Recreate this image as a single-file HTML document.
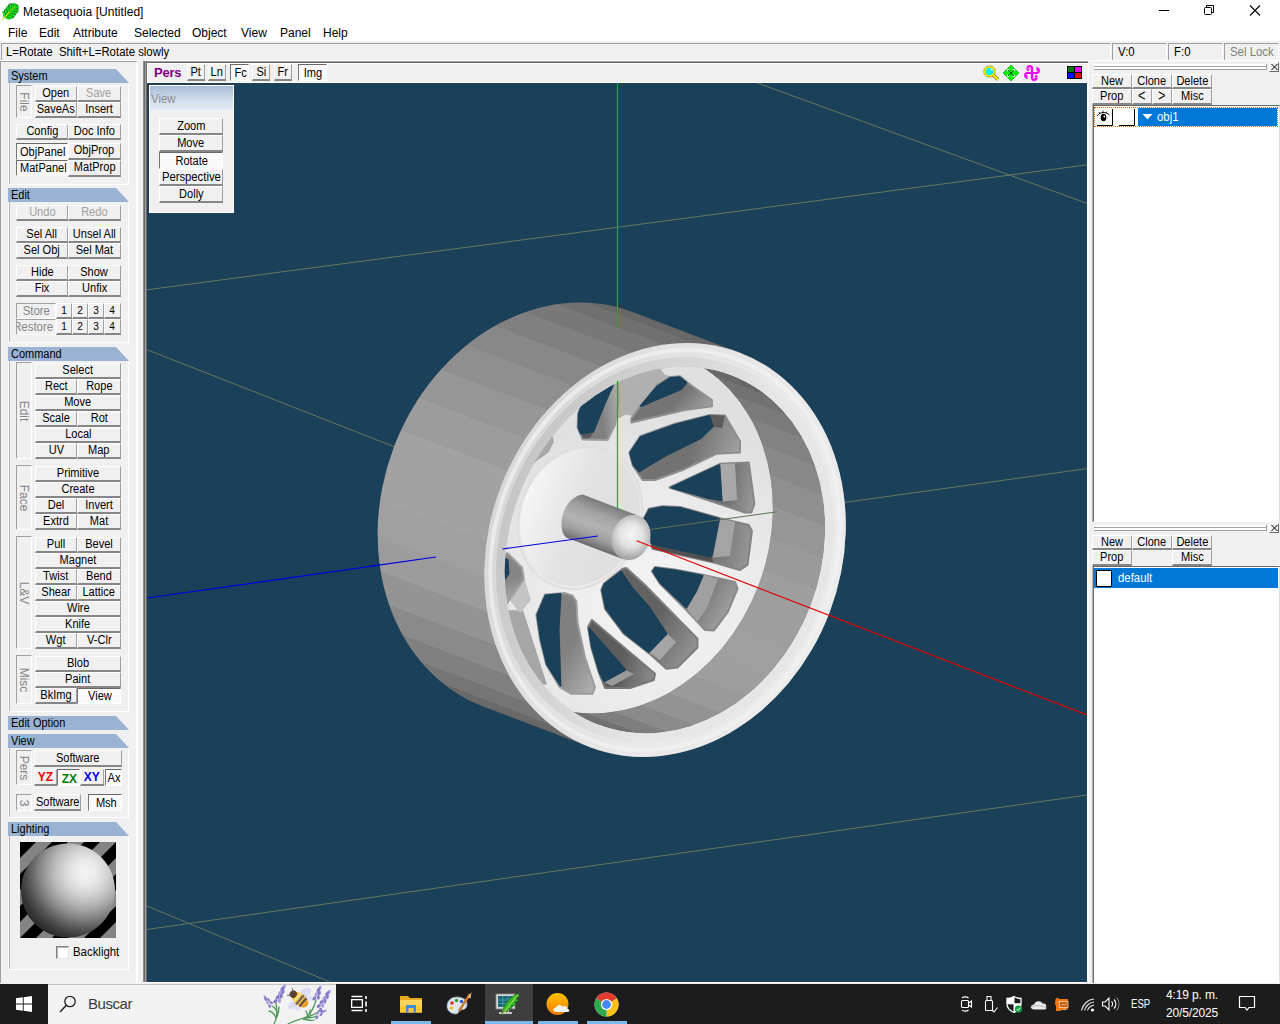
<!DOCTYPE html><html><head><meta charset="utf-8"><title>Metasequoia [Untitled]</title><style>
*{box-sizing:border-box;margin:0;padding:0}
html,body{width:1280px;height:1024px;overflow:hidden;background:#f0f0f0}
body{position:relative;font-family:"Liberation Sans",sans-serif;font-size:12px;color:#000}
.a{position:absolute}
.t{position:absolute;white-space:nowrap;line-height:14px;font-size:12px}
.b{position:absolute;background:#f0f0f0;border-top:1px solid #fff;border-left:1px solid #fff;border-right:1px solid #a0a0a0;border-bottom:2px solid #868686;font-size:12px;line-height:13px;white-space:nowrap;overflow:hidden;display:flex;justify-content:center;align-items:flex-start}
.b>span{display:block;flex:none;transform:scaleX(.92);position:relative;top:0px}
.b.p{border-top:1px solid #696969;border-left:1px solid #767676;border-right:1px solid #fff;border-bottom:1px solid #fff;background:#f9f9f9}
.b.p>span{top:1px;left:1px}
.b.p.t2>span{top:2px}
.sx{display:inline-block;transform:scaleX(.95);transform-origin:0 50%}
.b.d{color:#a0a0a0}
.hd{position:absolute;left:8px;width:121px;height:14px;background:#9ab3d3;clip-path:polygon(0 0,108px 0,121px 14px,0 14px);font-size:12px;line-height:14px;padding-left:3px}
.hd span{display:inline-block;transform:scaleX(.915);transform-origin:0 50%}
.gb{position:absolute;left:8px;width:121px;border:1px solid #fff;border-top:none;box-shadow:inset 1px 0 0 #b4b4b4}
.vl{position:absolute;border-top:1px solid #a0a0a0;border-left:1px solid #a0a0a0;border-right:1px solid #fff;border-bottom:1px solid #fff;color:#858585;font-size:12px}
.vl span{position:absolute;left:50%;top:50%;transform:translate(-50%,-50%) rotate(90deg);white-space:nowrap;line-height:12px}
.sc{position:absolute;border-top:1px solid #a0a0a0;border-left:1px solid #a0a0a0;border-right:1px solid #fff;border-bottom:1px solid #fff;font-size:12px;line-height:14px;padding-left:4px;white-space:nowrap;overflow:hidden}
.seg{font-family:"Liberation Sans",sans-serif}
</style></head><body>
<div class="a" style="left:0;top:0;width:1280px;height:22px;background:#fff"></div>
<svg class="a" style="left:1px;top:2px" width="19" height="19" viewBox="0 0 19 19">
<path d="M2 10 L8.500 1.500 L14.500 1.500 L17.500 3.500 L17.500 9 L12 16.500 L6 17 L2.500 15 Z" fill="#0c8a14"/>
<g stroke="#5a6a7a" stroke-width="1.200" fill="none" opacity="0.700"><path d="M1.500 9.500 L3.500 13 M3.500 7 L5.500 11 M5.500 4.500 L7.500 9 M7.500 2.500 L9.500 7 M9.500 1.200 L11.500 5"/><path d="M16.800 9.800 L13 11 M15 12.500 L11 13.500 M13 15.500 L9 15.800"/></g>
<g stroke="#14e61c" stroke-width="1.500" fill="none" stroke-linecap="round"><path d="M2.500 10.500 L4 14.500 M4.500 8 L6 12.500 M6.500 5.500 L8 10.500 M8.800 3 L10 8.500 M11 2 L12 6.500 M13.800 2 L13.500 5"/>
<path d="M17 4.500 L13.500 6 M17 8 L12 8.300 M15.500 11 L10.500 10.300 M13.500 13.500 L8.800 12.200 M11.500 15.800 L7 14 M8.500 17 L5 15.800"/></g>
<path d="M1.500 17.500 L14.500 4" stroke="#c8dc10" stroke-width="1.100" fill="none"/><path d="M9 10 L14.500 4" stroke="#3cc818" stroke-width="1.100" fill="none"/>
</svg>
<div class="t" style="left:23px;top:5px;font-size:12px;letter-spacing:0.05px">Metasequoia [Untitled]</div>
<svg class="a" style="left:1142px;top:0" width="138" height="22" viewBox="0 0 138 22">
<path d="M17 10.5 H27" stroke="#000" stroke-width="1"/>
<rect x="62.500" y="7.500" width="7" height="7" fill="none" stroke="#000" rx="1"/>
<path d="M64.500 7.500 V5.500 H71.500 V12.500 H69.500" fill="none" stroke="#000"/>
<path d="M108 5.500 L118 15.500 M118 5.500 L108 15.500" stroke="#000" stroke-width="1.1"/>
</svg>
<div class="a" style="left:0;top:22px;width:1280px;height:19px;background:#fff"></div>
<div class="t" style="left:8px;top:26px">File</div>
<div class="t" style="left:39px;top:26px">Edit</div>
<div class="t" style="left:73px;top:26px">Attribute</div>
<div class="t" style="left:134px;top:26px">Selected</div>
<div class="t" style="left:192px;top:26px">Object</div>
<div class="t" style="left:241px;top:26px">View</div>
<div class="t" style="left:280px;top:26px">Panel</div>
<div class="t" style="left:323px;top:26px">Help</div>
<div class="a" style="left:0;top:41px;width:1280px;height:20px;background:#f0f0f0"></div>
<div class="sc" style="left:1px;top:43px;width:1110px;height:18px;line-height:17px"><i class="sx" style="font-style:normal">L=Rotate&nbsp;&nbsp;Shift+L=Rotate slowly</i></div>
<div class="sc" style="left:1112px;top:43px;width:55px;height:18px;padding-left:5px;line-height:17px"><i class="sx" style="font-style:normal">V:0</i></div>
<div class="sc" style="left:1168px;top:43px;width:55px;height:18px;padding-left:5px;line-height:17px"><i class="sx" style="font-style:normal">F:0</i></div>
<div class="sc" style="left:1224px;top:43px;width:55px;height:18px;padding-left:5px;line-height:17px;color:#808080"><i class="sx" style="font-style:normal">Sel Lock</i></div>
<div class="a" style="left:0;top:60px;width:1280px;height:1px;background:#fff"></div>
<div class="a" style="left:0;top:61px;width:138px;height:923px;background:#f0f0f0;border-left:1px solid #a0a0a0;border-top:1px solid #a0a0a0;border-right:2px solid #fff;border-bottom:1px solid #fff"></div>
<div class="a" style="left:138px;top:61px;width:5px;height:923px;background:#f0f0f0"></div>
<div class="hd" style="top:69px"><span>System</span></div>
<div class="gb" style="top:83px;height:102px"></div>
<div class="vl" style="left:16px;top:85px;width:16px;height:33px"><span>File</span></div>
<div class="b " style="left:35px;top:86px;width:42px;height:16px;"><span>Open</span></div>
<div class="b d" style="left:77px;top:86px;width:44px;height:16px;"><span>Save</span></div>
<div class="b " style="left:35px;top:102px;width:42px;height:16px;"><span>SaveAs</span></div>
<div class="b " style="left:77px;top:102px;width:44px;height:16px;"><span>Insert</span></div>
<div class="b " style="left:16px;top:124px;width:52px;height:16px;"><span>Config</span></div>
<div class="b " style="left:68px;top:124px;width:53px;height:16px;"><span>Doc Info</span></div>
<div class="b p t2" style="left:16px;top:143px;width:52px;height:17px;"><span>ObjPanel</span></div>
<div class="b " style="left:68px;top:143px;width:53px;height:17px;padding-top:1px;padding-top:0"><span>ObjProp</span></div>
<div class="b p" style="left:16px;top:160px;width:52px;height:16px;"><span>MatPanel</span></div>
<div class="b " style="left:68px;top:160px;width:53px;height:17px;padding-top:1px;padding-top:0"><span>MatProp</span></div>
<div class="hd" style="top:188px"><span>Edit</span></div>
<div class="gb" style="top:202px;height:141px"></div>
<div class="b d" style="left:16px;top:205px;width:52px;height:16px;"><span>Undo</span></div>
<div class="b d" style="left:68px;top:205px;width:53px;height:16px;"><span>Redo</span></div>
<div class="b " style="left:16px;top:227px;width:52px;height:16px;"><span>Sel All</span></div>
<div class="b " style="left:68px;top:227px;width:53px;height:16px;"><span>Unsel All</span></div>
<div class="b " style="left:16px;top:243px;width:52px;height:16px;"><span>Sel Obj</span></div>
<div class="b " style="left:68px;top:243px;width:53px;height:16px;"><span>Sel Mat</span></div>
<div class="b " style="left:16px;top:265px;width:52px;height:16px;"><span>Hide</span></div>
<div class="b " style="left:68px;top:265px;width:53px;height:16px;"><span>Show</span></div>
<div class="b " style="left:16px;top:281px;width:52px;height:16px;"><span>Fix</span></div>
<div class="b " style="left:68px;top:281px;width:53px;height:16px;"><span>Unfix</span></div>
<div class="vl" style="left:16px;top:303px;width:40px;height:16px;font-size:12px;text-align:center;line-height:14px;overflow:hidden"><i class="sx" style="font-style:normal;transform-origin:50% 50%">Store</i></div>
<div class="vl" style="left:16px;top:319px;width:40px;height:16px;font-size:12px;text-align:center;line-height:14px;overflow:hidden;text-indent:-3px"><i class="sx" style="font-style:normal;transform-origin:50% 50%">Restore</i></div>
<div class="b " style="left:56px;top:303px;width:16px;height:16px;font-size:11px"><span>1</span></div>
<div class="b " style="left:72px;top:303px;width:16px;height:16px;font-size:11px"><span>2</span></div>
<div class="b " style="left:88px;top:303px;width:16px;height:16px;font-size:11px"><span>3</span></div>
<div class="b " style="left:104px;top:303px;width:17px;height:16px;font-size:11px"><span>4</span></div>
<div class="b " style="left:56px;top:319px;width:16px;height:16px;font-size:11px"><span>1</span></div>
<div class="b " style="left:72px;top:319px;width:16px;height:16px;font-size:11px"><span>2</span></div>
<div class="b " style="left:88px;top:319px;width:16px;height:16px;font-size:11px"><span>3</span></div>
<div class="b " style="left:104px;top:319px;width:17px;height:16px;font-size:11px"><span>4</span></div>
<div class="hd" style="top:347px"><span>Command</span></div>
<div class="gb" style="top:361px;height:351px"></div>
<div class="vl" style="left:16px;top:362px;width:16px;height:97px"><span>Edit</span></div>
<div class="b " style="left:35px;top:363px;width:86px;height:16px;"><span>Select</span></div>
<div class="b " style="left:35px;top:379px;width:42px;height:16px;"><span>Rect</span></div>
<div class="b " style="left:77px;top:379px;width:44px;height:16px;"><span>Rope</span></div>
<div class="b " style="left:35px;top:395px;width:86px;height:16px;"><span>Move</span></div>
<div class="b " style="left:35px;top:411px;width:42px;height:16px;"><span>Scale</span></div>
<div class="b " style="left:77px;top:411px;width:44px;height:16px;"><span>Rot</span></div>
<div class="b " style="left:35px;top:427px;width:86px;height:16px;"><span>Local</span></div>
<div class="b " style="left:35px;top:443px;width:42px;height:16px;"><span>UV</span></div>
<div class="b " style="left:77px;top:443px;width:44px;height:16px;"><span>Map</span></div>
<div class="vl" style="left:16px;top:465px;width:16px;height:65px"><span>Face</span></div>
<div class="b " style="left:35px;top:466px;width:86px;height:16px;"><span>Primitive</span></div>
<div class="b " style="left:35px;top:482px;width:86px;height:16px;"><span>Create</span></div>
<div class="b " style="left:35px;top:498px;width:42px;height:16px;"><span>Del</span></div>
<div class="b " style="left:77px;top:498px;width:44px;height:16px;"><span>Invert</span></div>
<div class="b " style="left:35px;top:514px;width:42px;height:16px;"><span>Extrd</span></div>
<div class="b " style="left:77px;top:514px;width:44px;height:16px;"><span>Mat</span></div>
<div class="vl" style="left:16px;top:536px;width:16px;height:113px"><span>L&amp;V</span></div>
<div class="b " style="left:35px;top:537px;width:42px;height:16px;"><span>Pull</span></div>
<div class="b " style="left:77px;top:537px;width:44px;height:16px;"><span>Bevel</span></div>
<div class="b " style="left:35px;top:553px;width:86px;height:16px;"><span>Magnet</span></div>
<div class="b " style="left:35px;top:569px;width:42px;height:16px;"><span>Twist</span></div>
<div class="b " style="left:77px;top:569px;width:44px;height:16px;"><span>Bend</span></div>
<div class="b " style="left:35px;top:585px;width:42px;height:16px;"><span>Shear</span></div>
<div class="b " style="left:77px;top:585px;width:44px;height:16px;"><span>Lattice</span></div>
<div class="b " style="left:35px;top:601px;width:86px;height:16px;"><span>Wire</span></div>
<div class="b " style="left:35px;top:617px;width:86px;height:16px;"><span>Knife</span></div>
<div class="b " style="left:35px;top:633px;width:42px;height:16px;"><span>Wgt</span></div>
<div class="b " style="left:77px;top:633px;width:44px;height:16px;"><span>V-Clr</span></div>
<div class="vl" style="left:16px;top:655px;width:16px;height:49px"><span>Misc</span></div>
<div class="b " style="left:35px;top:656px;width:86px;height:16px;"><span>Blob</span></div>
<div class="b " style="left:35px;top:672px;width:86px;height:16px;"><span>Paint</span></div>
<div class="b " style="left:35px;top:688px;width:42px;height:16px;"><span>BkImg</span></div>
<div class="b p" style="left:77px;top:688px;width:44px;height:16px;"><span>View</span></div>
<div class="hd" style="top:716px"><span>Edit Option</span></div>
<div class="hd" style="top:734px"><span>View</span></div>
<div class="gb" style="top:748px;height:70px"></div>
<div class="vl" style="left:16px;top:750px;width:16px;height:35px"><span>Pers</span></div>
<div class="b " style="left:34px;top:750px;width:88px;height:17px;padding-top:1px;"><span>Software</span></div>
<div class="b " style="left:34px;top:769px;width:23px;height:17px;padding-top:1px;font-size:13px;padding-top:0"><span><b style="color:#f00000">YZ</b></span></div>
<div class="b p t2" style="left:57px;top:769px;width:23px;height:17px;font-size:13px"><span><b style="color:#008000">ZX</b></span></div>
<div class="b " style="left:80px;top:769px;width:24px;height:17px;padding-top:1px;font-size:13px;padding-top:0"><span><b style="color:#0000f0">XY</b></span></div>
<div class="b p t2" style="left:105px;top:769px;width:17px;height:17px;"><span>Ax</span></div>
<div class="vl" style="left:16px;top:794px;width:16px;height:17px"><span>3</span></div>
<div class="b " style="left:34px;top:794px;width:47px;height:17px;padding-top:1px;"><span>Software</span></div>
<div class="b p t2" style="left:88px;top:794px;width:34px;height:17px;"><span>Msh</span></div>
<div class="hd" style="top:822px"><span>Lighting</span></div>
<div class="gb" style="top:836px;height:134px"></div>
<svg class="a" style="left:20px;top:842px" width="96" height="96" viewBox="0 0 96 96">
<defs><pattern id="stp" width="32" height="32" patternUnits="userSpaceOnUse"><rect width="32" height="32" fill="#848484"/><path d="M0 0 H16 L0 16 Z M32 0 V16 L16 32 H0 Z" fill="#000"/></pattern>
<radialGradient id="sph" cx="0.685" cy="0.305" r="0.8"><stop offset="0" stop-color="#f3f3f3"/><stop offset="0.16" stop-color="#eaeaea"/><stop offset="0.29" stop-color="#d4d4d4"/><stop offset="0.4" stop-color="#bebebe"/><stop offset="0.51" stop-color="#a2a2a2"/><stop offset="0.64" stop-color="#7c7c7c"/><stop offset="0.77" stop-color="#525252"/><stop offset="0.88" stop-color="#363636"/><stop offset="0.97" stop-color="#282828"/></radialGradient></defs>
<rect width="96" height="96" fill="url(#stp)"/><circle cx="48" cy="48.500" r="47" fill="url(#sph)"/></svg>
<div class="a" style="left:56px;top:946px;width:13px;height:13px;background:#fff;border:1px solid;border-color:#808080 #e4e4e4 #e4e4e4 #808080;box-shadow:inset 1px 1px 0 #b8b8b8"></div>
<div class="t" style="left:73px;top:945px"><i class="sx" style="font-style:normal">Backlight</i></div>
<div class="a" style="left:143px;top:61px;width:945px;height:921px;background:linear-gradient(90deg,#8c8c8c 0,#8c8c8c 1px,#696969 1px,#696969 2px,#a0a0a0 2px,#a0a0a0 3px,#696969 3px,#696969 4px,#f0f0f0 4px)"></div>
<div class="a" style="left:147px;top:61px;width:941px;height:2px;background:linear-gradient(#a0a0a0 0,#a0a0a0 1px,#696969 1px)"></div>
<div class="a" style="left:143px;top:982px;width:947px;height:2px;background:#fff"></div>
<div class="a" style="left:147px;top:63px;width:940px;height:20px;background:#f0f0f0;border-left:1px solid #fff;border-top:1px solid #fff;border-bottom:1px solid #fff"></div>
<div class="a" id="vp" style="left:147px;top:83px;width:940px;height:899px;background:#1a405a;overflow:hidden">
<svg class="a" style="left:0;top:0" width="940" height="899" viewBox="147 83 940 899">
<defs>
<linearGradient id="gt" gradientUnits="userSpaceOnUse" x1="686.6" y1="332.5" x2="536.8" y2="727.0"><stop offset="0.0000" stop-color="#626262"/><stop offset="0.0019" stop-color="#626262"/><stop offset="0.0019" stop-color="#686868"/><stop offset="0.0170" stop-color="#686868"/><stop offset="0.0170" stop-color="#707070"/><stop offset="0.0468" stop-color="#707070"/><stop offset="0.0468" stop-color="#787878"/><stop offset="0.0904" stop-color="#787878"/><stop offset="0.0904" stop-color="#808080"/><stop offset="0.1464" stop-color="#808080"/><stop offset="0.1464" stop-color="#888888"/><stop offset="0.2132" stop-color="#888888"/><stop offset="0.2132" stop-color="#8f8f8f"/><stop offset="0.2887" stop-color="#8f8f8f"/><stop offset="0.2887" stop-color="#969696"/><stop offset="0.3706" stop-color="#969696"/><stop offset="0.3706" stop-color="#9c9c9c"/><stop offset="0.4564" stop-color="#9c9c9c"/><stop offset="0.4564" stop-color="#a2a2a2"/><stop offset="0.5436" stop-color="#a2a2a2"/><stop offset="0.5436" stop-color="#a2a2a2"/><stop offset="0.6294" stop-color="#a2a2a2"/><stop offset="0.6294" stop-color="#a0a0a0"/><stop offset="0.7113" stop-color="#a0a0a0"/><stop offset="0.7113" stop-color="#9c9c9c"/><stop offset="0.7868" stop-color="#9c9c9c"/><stop offset="0.7868" stop-color="#949494"/><stop offset="0.8536" stop-color="#949494"/><stop offset="0.8536" stop-color="#8a8a8a"/><stop offset="0.9096" stop-color="#8a8a8a"/><stop offset="0.9096" stop-color="#808080"/><stop offset="0.9532" stop-color="#808080"/><stop offset="0.9532" stop-color="#757575"/><stop offset="0.9830" stop-color="#757575"/><stop offset="0.9830" stop-color="#696969"/><stop offset="0.9981" stop-color="#696969"/><stop offset="0.9981" stop-color="#5f5f5f"/><stop offset="1.0000" stop-color="#5f5f5f"/></linearGradient>
<linearGradient id="gb" gradientUnits="userSpaceOnUse" x1="731.4" y1="375.2" x2="598.6" y2="724.8"><stop offset="0.0000" stop-color="#606060"/><stop offset="0.0019" stop-color="#606060"/><stop offset="0.0019" stop-color="#686868"/><stop offset="0.0170" stop-color="#686868"/><stop offset="0.0170" stop-color="#727272"/><stop offset="0.0468" stop-color="#727272"/><stop offset="0.0468" stop-color="#7a7a7a"/><stop offset="0.0904" stop-color="#7a7a7a"/><stop offset="0.0904" stop-color="#828282"/><stop offset="0.1464" stop-color="#828282"/><stop offset="0.1464" stop-color="#898989"/><stop offset="0.2132" stop-color="#898989"/><stop offset="0.2132" stop-color="#8f8f8f"/><stop offset="0.2887" stop-color="#8f8f8f"/><stop offset="0.2887" stop-color="#969696"/><stop offset="0.3706" stop-color="#969696"/><stop offset="0.3706" stop-color="#9a9a9a"/><stop offset="0.4564" stop-color="#9a9a9a"/><stop offset="0.4564" stop-color="#9e9e9e"/><stop offset="0.5436" stop-color="#9e9e9e"/><stop offset="0.5436" stop-color="#9e9e9e"/><stop offset="0.6294" stop-color="#9e9e9e"/><stop offset="0.6294" stop-color="#9f9f9f"/><stop offset="0.7113" stop-color="#9f9f9f"/><stop offset="0.7113" stop-color="#9e9e9e"/><stop offset="0.7868" stop-color="#9e9e9e"/><stop offset="0.7868" stop-color="#9a9a9a"/><stop offset="0.8536" stop-color="#9a9a9a"/><stop offset="0.8536" stop-color="#939393"/><stop offset="0.9096" stop-color="#939393"/><stop offset="0.9096" stop-color="#8a8a8a"/><stop offset="0.9532" stop-color="#8a8a8a"/><stop offset="0.9532" stop-color="#7e7e7e"/><stop offset="0.9830" stop-color="#7e7e7e"/><stop offset="0.9830" stop-color="#707070"/><stop offset="0.9981" stop-color="#707070"/><stop offset="0.9981" stop-color="#656565"/><stop offset="1.0000" stop-color="#656565"/></linearGradient>
<radialGradient id="gd" gradientUnits="userSpaceOnUse" cx="650" cy="600" r="190"><stop offset="0" stop-color="#f4f4f4"/><stop offset="0.5" stop-color="#ececec"/><stop offset="1" stop-color="#e0e0e0"/></radialGradient>
<linearGradient id="grb" gradientUnits="userSpaceOnUse" x1="485" y1="480" x2="850" y2="620"><stop offset="0" stop-color="#d6d6d6"/><stop offset="0.3" stop-color="#e0e0e0"/><stop offset="0.6" stop-color="#e9e9e9"/><stop offset="1" stop-color="#ececec"/></linearGradient>
<linearGradient id="gri" gradientUnits="userSpaceOnUse" x1="485" y1="480" x2="850" y2="620"><stop offset="0" stop-color="#c2c2c2"/><stop offset="0.35" stop-color="#d4d4d4"/><stop offset="0.6" stop-color="#e6e6e6"/><stop offset="1" stop-color="#e6e6e6"/></linearGradient>
<linearGradient id="gh" gradientUnits="userSpaceOnUse" x1="521" y1="495" x2="640" y2="540"><stop offset="0" stop-color="#f6f6f6"/><stop offset="0.2" stop-color="#eeeeee"/><stop offset="0.45" stop-color="#e3e3e3"/><stop offset="1" stop-color="#dedede"/></linearGradient>
<clipPath id="cin"><path d="M810.82 605.39A155.98 187.00 20.8 0 1 598.59 724.81A155.98 187.00 20.8 0 1 519.18 494.61A155.98 187.00 20.8 0 1 731.41 375.19A155.98 187.00 20.8 0 1 810.82 605.39Z" /></clipPath>
<clipPath id="cdisc"><path d="M758.46 585.50A155.98 187.00 20.8 0 1 546.24 704.93A155.98 187.00 20.8 0 1 466.83 474.72A155.98 187.00 20.8 0 1 679.05 355.30A155.98 187.00 20.8 0 1 758.46 585.50Z" /></clipPath>
<clipPath id="chole"><path d="M739.75 578.40A135.96 163.00 20.8 0 1 554.77 682.49A135.96 163.00 20.8 0 1 485.55 481.83A135.96 163.00 20.8 0 1 670.53 377.74A135.96 163.00 20.8 0 1 739.75 578.40Z" /></clipPath>
</defs>
<line x1="147" y1="289.8" x2="1087" y2="164.8" stroke="#66775e" stroke-width="1"/>
<line x1="757.5" y1="83" x2="1087" y2="203.4" stroke="#66775e" stroke-width="1"/>
<line x1="147" y1="349.7" x2="400" y2="449" stroke="#66775e" stroke-width="1"/>
<line x1="640" y1="531" x2="1087" y2="468.6" stroke="#66775e" stroke-width="1"/>
<line x1="147" y1="929.5" x2="1087" y2="795" stroke="#66775e" stroke-width="1"/>
<line x1="147" y1="906" x2="330" y2="982" stroke="#66775e" stroke-width="1"/>
<line x1="617.5" y1="83" x2="617.5" y2="400" stroke="#00c000" stroke-width="1.2"/>
<line x1="147" y1="598" x2="440" y2="556.5" stroke="#0000e0" stroke-width="1.2"/>
<g fill="url(#gt)"><path d="M722.96 572.02A176.00 211.00 20.8 0 1 483.50 706.77A176.00 211.00 20.8 0 1 393.90 447.02A176.00 211.00 20.8 0 1 633.36 312.27A176.00 211.00 20.8 0 1 722.96 572.02Z" /><path d="M829.53 612.50A176.00 211.00 20.8 0 1 590.07 747.25A176.00 211.00 20.8 0 1 500.47 487.50A176.00 211.00 20.8 0 1 739.93 352.75A176.00 211.00 20.8 0 1 829.53 612.50Z" /><polygon points="633.4,312.3 739.9,352.8 590.1,747.2 483.5,706.8" fill="url(#gt)" /></g>
<path d="M829.53 612.50A176.00 211.00 20.8 0 1 590.07 747.25A176.00 211.00 20.8 0 1 500.47 487.50A176.00 211.00 20.8 0 1 739.93 352.75A176.00 211.00 20.8 0 1 829.53 612.50Z" fill="url(#grb)"/>
<path d="M824.07 610.43A170.16 204.00 20.8 0 1 592.56 740.70A170.16 204.00 20.8 0 1 505.93 489.57A170.16 204.00 20.8 0 1 737.44 359.30A170.16 204.00 20.8 0 1 824.07 610.43Z" fill="none" stroke="#f2f2f2" stroke-width="4" opacity="0.7"/>
<path d="M814.71 606.87A160.15 192.00 20.8 0 1 596.82 729.49A160.15 192.00 20.8 0 1 515.29 493.13A160.15 192.00 20.8 0 1 733.18 370.51A160.15 192.00 20.8 0 1 814.71 606.87Z" fill="none" stroke="url(#gri)" stroke-width="9"/>
<line x1="617.5" y1="300" x2="617.5" y2="328" stroke="#00c000" stroke-width="1.2"/>
<line x1="370" y1="566.4" x2="436" y2="557" stroke="#0000e0" stroke-width="1.2"/>
<g clip-path="url(#cin)">
<path d="M810.82 605.39A155.98 187.00 20.8 0 1 598.59 724.81A155.98 187.00 20.8 0 1 519.18 494.61A155.98 187.00 20.8 0 1 731.41 375.19A155.98 187.00 20.8 0 1 810.82 605.39Z" fill="url(#gb)"/>
<g clip-path="url(#cdisc)">
<path d="M758.46 585.50A155.98 187.00 20.8 0 1 546.24 704.93A155.98 187.00 20.8 0 1 466.83 474.72A155.98 187.00 20.8 0 1 679.05 355.30A155.98 187.00 20.8 0 1 758.46 585.50Z" fill="url(#gd)"/>
<polygon points="618.8,380.0 652.5,368.8 660.0,368.8 663.8,375.0 670.0,376.9 657.5,385.0 640.0,406.0 632.5,415.0 625.0,413.8 618.8,417.5" fill="#b0b0b0" stroke="#b0b0b0" stroke-width="1.5" stroke-linejoin="round"/>
<polygon points="534.0,462.0 551.0,432.0 553.0,442.0 548.0,452.0" fill="#a8a8a8" stroke="#a8a8a8" stroke-width="1.5" stroke-linejoin="round"/>
<polygon points="505.0,611.0 522.5,611.0 546.0,684.0 537.5,684.0 506.0,621.0" fill="#a6a6a6" stroke="#a6a6a6" stroke-width="1.5" stroke-linejoin="round"/>
<polygon points="510.0,599.0 524.0,580.0 530.0,600.0 520.0,612.0" fill="#c4c4c4" stroke="#c4c4c4" stroke-width="1.5" stroke-linejoin="round"/>
<linearGradient id="gwK" gradientUnits="userSpaceOnUse" x1="590.4" y1="411.5" x2="621.0" y2="407.6"><stop offset="0" stop-color="#808080"/><stop offset="0.35" stop-color="#808080"/><stop offset="1" stop-color="#b0b0b0"/></linearGradient>
<polygon points="578.1,413.8 581.3,405.0 591.3,392.5 615.0,381.3 617.5,380.0 618.8,400.0 615.0,425.0 607.5,440.0 582.5,439.4 577.5,427.5" fill="url(#gwK)" stroke="#9c9c9c" stroke-width="2" stroke-linejoin="round"/>
<linearGradient id="gwB" gradientUnits="userSpaceOnUse" x1="665.4" y1="390.1" x2="696.6" y2="421.5"><stop offset="0" stop-color="#747474"/><stop offset="0.35" stop-color="#747474"/><stop offset="1" stop-color="#a4a4a4"/></linearGradient>
<polygon points="631.3,418.5 640.0,406.3 657.5,385.0 670.0,376.9 680.0,376.3 687.5,382.5 692.5,386.3 711.9,400.0 711.9,406.3 685.0,410.0 631.3,422.5" fill="url(#gwB)" stroke="#909090" stroke-width="2" stroke-linejoin="round"/>
<linearGradient id="gwC" gradientUnits="userSpaceOnUse" x1="667.2" y1="443.1" x2="734.0" y2="468.3"><stop offset="0" stop-color="#727272"/><stop offset="0.35" stop-color="#727272"/><stop offset="1" stop-color="#a2a2a2"/></linearGradient>
<polygon points="629.4,452.5 640.0,436.3 675.0,423.8 710.0,415.0 725.0,415.6 740.0,441.3 740.0,452.5 716.3,453.8 682.5,470.0 655.0,480.0 642.5,480.0 632.5,465.0" fill="url(#gwC)" stroke="#8e8e8e" stroke-width="2" stroke-linejoin="round"/>
<linearGradient id="gwD" gradientUnits="userSpaceOnUse" x1="705.0" y1="487.6" x2="755.7" y2="496.8"><stop offset="0" stop-color="#6a6a6a"/><stop offset="0.35" stop-color="#6a6a6a"/><stop offset="1" stop-color="#9a9a9a"/></linearGradient>
<polygon points="669.4,487.5 720.0,463.8 748.8,462.5 754.4,503.8 751.3,512.5 745.0,512.5 707.5,500.0" fill="url(#gwD)" stroke="#868686" stroke-width="2" stroke-linejoin="round"/>
<linearGradient id="gwE" gradientUnits="userSpaceOnUse" x1="675.5" y1="527.9" x2="751.9" y2="543.2"><stop offset="0" stop-color="#666666"/><stop offset="0.35" stop-color="#666666"/><stop offset="1" stop-color="#969696"/></linearGradient>
<polygon points="643.1,520.0 648.8,508.8 662.5,506.3 680.0,506.9 720.0,518.1 748.8,525.0 751.9,531.3 747.5,565.0 740.0,570.0 713.8,562.5 652.5,548.8" fill="url(#gwE)" stroke="#828282" stroke-width="2" stroke-linejoin="round"/>
<linearGradient id="gwF" gradientUnits="userSpaceOnUse" x1="675.5" y1="581.1" x2="728.0" y2="611.6"><stop offset="0" stop-color="#6e6e6e"/><stop offset="0.35" stop-color="#6e6e6e"/><stop offset="1" stop-color="#9e9e9e"/></linearGradient>
<polygon points="651.9,571.3 655.0,566.9 675.0,569.4 703.8,575.0 735.0,581.9 737.5,588.8 727.5,612.5 713.8,630.6 705.0,630.0 686.3,610.0 660.0,583.8" fill="url(#gwF)" stroke="#8a8a8a" stroke-width="2" stroke-linejoin="round"/>
<linearGradient id="gwG" gradientUnits="userSpaceOnUse" x1="628.4" y1="607.7" x2="693.7" y2="653.0"><stop offset="0" stop-color="#626262"/><stop offset="0.35" stop-color="#626262"/><stop offset="1" stop-color="#929292"/></linearGradient>
<polygon points="601.3,590.0 603.8,583.8 622.5,568.8 626.3,568.1 645.0,585.0 697.5,638.8 697.5,647.5 677.5,667.5 666.3,668.8 648.8,653.1 623.8,633.8 605.0,608.8" fill="url(#gwG)" stroke="#7e7e7e" stroke-width="2" stroke-linejoin="round"/>
<linearGradient id="gwH" gradientUnits="userSpaceOnUse" x1="602.0" y1="659.8" x2="655.7" y2="669.9"><stop offset="0" stop-color="#5c5c5c"/><stop offset="0.35" stop-color="#5c5c5c"/><stop offset="1" stop-color="#8c8c8c"/></linearGradient>
<polygon points="588.1,626.9 591.9,620.0 655.0,673.8 653.8,680.0 630.0,688.0 605.0,688.0 598.8,672.5 591.3,647.5" fill="url(#gwH)" stroke="#787878" stroke-width="2" stroke-linejoin="round"/>
<linearGradient id="gwI" gradientUnits="userSpaceOnUse" x1="550.1" y1="632.1" x2="608.4" y2="667.9"><stop offset="0" stop-color="#808080"/><stop offset="0.35" stop-color="#808080"/><stop offset="1" stop-color="#b0b0b0"/></linearGradient>
<polygon points="536.3,615.0 545.0,594.4 565.0,593.1 572.5,595.6 576.3,601.3 577.5,622.5 585.0,657.5 595.0,687.5 592.5,693.8 571.3,693.8 560.0,687.5 546.3,665.0 540.0,640.0" fill="url(#gwI)" stroke="#9c9c9c" stroke-width="2" stroke-linejoin="round"/>
<linearGradient id="gwJ" gradientUnits="userSpaceOnUse" x1="504.0" y1="568.8" x2="519.7" y2="602.8"><stop offset="0" stop-color="#868686"/><stop offset="0.35" stop-color="#868686"/><stop offset="1" stop-color="#b6b6b6"/></linearGradient>
<polygon points="501.0,553.0 508.0,553.5 522.0,567.5 524.0,579.5 510.0,599.0 502.0,611.0 499.0,600.0" fill="url(#gwJ)" stroke="#a2a2a2" stroke-width="2" stroke-linejoin="round"/>
<polygon points="710.0,415.0 725.0,415.6 722.0,428.0 713.0,427.0" fill="#5c5c5c" />
<polygon points="720.0,464.0 735.0,463.5 737.0,500.0 722.5,501.5" fill="#a8a8a8" />
<polygon points="720.0,518.5 735.0,522.0 730.0,556.0 713.0,557.5" fill="#a4a4a4" />
<polygon points="652.0,544.5 711.0,557.0 713.8,562.5 652.5,548.8" fill="#505050" />
<polygon points="703.8,575.0 718.0,579.0 706.0,610.0 697.0,622.0 687.0,609.0 696.0,592.0" fill="#a0a0a0" />
<polygon points="667.5,634.0 676.0,642.0 660.0,660.0 649.0,652.5" fill="#a6a6a6" />
<polygon points="625.5,670.0 634.0,674.0 612.0,686.0 604.0,682.0" fill="#9a9a9a" />
<polygon points="581.0,434.0 593.5,432.0 590.0,438.0 583.0,438.5" fill="#585858" />
<polygon points="578.8,414.0 581.8,405.5 591.6,393.5 614.0,382.5 604.5,403.8 593.3,431.5 581.0,433.5 578.5,427.5" fill="#1a405a" stroke="#1a405a" stroke-width="2" stroke-linejoin="round"/>
<polygon points="641.0,406.0 657.8,386.0 670.3,378.0 679.6,377.3 686.3,382.8 680.8,389.3 660.0,397.8 647.5,403.4" fill="#1a405a" stroke="#1a405a" stroke-width="2" stroke-linejoin="round"/>
<polygon points="630.2,452.8 640.6,437.2 675.0,424.8 709.3,416.0 712.8,426.3 700.7,438.0 663.4,456.6 639.0,471.4 633.4,464.6" fill="#1a405a" stroke="#1a405a" stroke-width="2" stroke-linejoin="round"/>
<polygon points="671.5,487.5 719.3,465.2 721.5,500.0 707.5,497.8" fill="#1a405a" stroke="#1a405a" stroke-width="2" stroke-linejoin="round"/>
<polygon points="644.0,520.0 649.4,509.8 662.5,507.3 680.0,507.9 719.0,519.0 711.7,555.3 710.6,556.6 652.0,543.8 650.5,531.3" fill="#1a405a" stroke="#1a405a" stroke-width="2" stroke-linejoin="round"/>
<polygon points="653.0,571.3 655.5,567.9 675.0,570.4 702.5,575.8 695.5,592.0 686.2,607.3 660.7,583.1" fill="#1a405a" stroke="#1a405a" stroke-width="2" stroke-linejoin="round"/>
<polygon points="602.3,590.0 604.6,584.4 621.0,571.8 632.0,588.0 649.5,608.0 666.5,633.8 648.8,652.0 624.5,633.0 606.0,608.4" fill="#1a405a" stroke="#1a405a" stroke-width="2" stroke-linejoin="round"/>
<polygon points="589.0,628.5 625.2,669.8 604.2,681.3 599.6,672.0 592.2,647.3" fill="#1a405a" stroke="#1a405a" stroke-width="2" stroke-linejoin="round"/>
<polygon points="537.3,615.0 545.6,595.4 560.5,594.1 558.6,630.0 560.4,685.5 547.0,664.5 541.0,640.0" fill="#1a405a" stroke="#1a405a" stroke-width="2" stroke-linejoin="round"/>
<polygon points="500.0,555.5 507.5,560.0 508.5,573.5 500.0,586.0" fill="#1a405a" stroke="#1a405a" stroke-width="2" stroke-linejoin="round"/>
<path d="M636.46 539.16A60.47 72.50 20.8 0 1 554.19 585.46A60.47 72.50 20.8 0 1 523.40 496.21A60.47 72.50 20.8 0 1 605.68 449.91A60.47 72.50 20.8 0 1 636.46 539.16Z" fill="none" stroke="#e0e0e0" stroke-width="2.5"/>
<path d="M634.51 538.42A58.39 70.00 20.8 0 1 555.07 583.12A58.39 70.00 20.8 0 1 525.35 496.95A58.39 70.00 20.8 0 1 604.79 452.25A58.39 70.00 20.8 0 1 634.51 538.42Z" fill="url(#gh)"/>
</g></g>
<line x1="650" y1="529.5" x2="777" y2="511.8" stroke="#5d7058" stroke-width="1"/>
<defs><linearGradient id="gax" gradientUnits="userSpaceOnUse" x1="604" y1="503" x2="588" y2="545"><stop offset="0" stop-color="#7c7c7c"/><stop offset="0.25" stop-color="#a0a0a0"/><stop offset="0.55" stop-color="#b4b4b4"/><stop offset="0.8" stop-color="#9c9c9c"/><stop offset="1" stop-color="#6e6e6e"/></linearGradient>
<radialGradient id="gcap" gradientUnits="userSpaceOnUse" cx="630" cy="535" r="24"><stop offset="0" stop-color="#f6f6f6"/><stop offset="0.5" stop-color="#e2e2e2"/><stop offset="1" stop-color="#a4a4a4"/></radialGradient></defs>
<path d="M582.6 494.6 L636 514.8 L622.5 559 L566.8 537.8 C557 532 560 499 582.6 494.600 Z" fill="url(#gax)"/>
<ellipse cx="631" cy="537.500" rx="19" ry="23" transform="rotate(20.800 631 537.500)" fill="url(#gcap)"/>
<line x1="617.5" y1="381" x2="617.5" y2="510" stroke="#00c000" stroke-width="1.2"/>
<line x1="502.5" y1="549" x2="597.8" y2="536" stroke="#0000e0" stroke-width="1.2"/>
<line x1="636.5" y1="540.8" x2="1087" y2="715" stroke="#e00000" stroke-width="1.2"/>
</svg>
</div>
<div class="a" style="left:1087px;top:63px;width:2px;height:921px;background:#fff"></div><div class="a" style="left:1089px;top:61px;width:3px;height:923px;background:#f0f0f0"></div>
<div class="t" style="left:154px;top:66px;font-weight:bold;color:#800080;font-size:13px;letter-spacing:-0.2px">Pers</div>
<div class="b " style="left:187px;top:64px;width:18px;height:17px;padding-top:1px;"><span>Pt</span></div>
<div class="b " style="left:208px;top:64px;width:18px;height:17px;padding-top:1px;"><span>Ln</span></div>
<div class="b p t2" style="left:230px;top:64px;width:19px;height:17px;"><span>Fc</span></div>
<div class="b " style="left:252px;top:64px;width:18px;height:17px;padding-top:1px;"><span>Si</span></div>
<div class="b " style="left:274px;top:64px;width:18px;height:17px;padding-top:1px;"><span>Fr</span></div>
<div class="b p t2" style="left:298px;top:64px;width:29px;height:17px;"><span>Img</span></div>
<svg class="a" style="left:980px;top:64px" width="104" height="20" viewBox="0 0 104 20">
<g transform="translate(9.500 7.500) scale(0.840) translate(-9 -7.250)"><path d="M6.500 2 H11.500 L14.500 5 V9.500 L11.500 12.500 H6.500 L3.500 9.500 V5 Z" fill="#00f0f8" stroke="#f0f000" stroke-width="2"/><path d="M6.500 2 H11.500 L14.500 5 V9.500 L11.500 12.500 H6.500 L3.500 9.500 V5 Z" fill="none" stroke="#707000" stroke-width="0.500" transform="translate(9 7.250) scale(1.220) translate(-9 -7.250)"/>
<path d="M10.500 4 L12.500 6" stroke="#fff" stroke-width="1.200"/>
</g>
<path d="M13 11 L18 15.500" stroke="#707000" stroke-width="3.200"/><path d="M12.500 10.500 L18 15.500" stroke="#f4f400" stroke-width="2"/>
<path d="M31 1 L39 9 L31 17 L23 9 Z" fill="#00ee00" stroke="#00a800" stroke-width="0.600"/>
<path d="M28 6 L34 12 M34 6 L28 12" stroke="#0a6a0a" stroke-width="1"/><path d="M27.500 7.500 V5.500 H29.500 M32.500 5.500 H34.500 V7.500 M34.500 10.500 V12.500 H32.500 M29.500 12.500 H27.500 V10.500" stroke="#d8ffd8" stroke-width="1.100" fill="none"/><rect x="30.500" y="8.500" width="1" height="1" fill="#000"/>
<g fill="none" stroke="#f000f0" stroke-width="2.200"><path d="M52 9 V4.500 C52 1.500 47.500 1.500 47.500 4"/><path d="M52 9 H56.500 C59.500 9 59.500 4.500 57 4.500"/><path d="M52 9 V13.500 C52 16.500 56.500 16.500 56.500 14"/><path d="M52 9 H47.500 C44.500 9 44.500 13.500 47 13.500"/></g>
<g fill="#f000f0"><path d="M45.500 4.500 L50 4.500 L48 7.500 Z M56.500 2.500 L60 6 L56.500 7 Z M58.500 13.500 L54 13.500 L56 10.500 Z M47.500 15.500 L44 12 L47.500 11 Z"/></g>
<rect x="87" y="2" width="15" height="13" fill="#000"/><rect x="88" y="3" width="6" height="5" fill="#007a10"/><rect x="95" y="3" width="6" height="5" fill="#f800f8"/><rect x="88" y="9" width="6" height="5" fill="#0010f8"/><rect x="95" y="9" width="6" height="5" fill="#f80000"/>
</svg>
<div class="a" style="left:149px;top:85px;width:85px;height:128px;background:#f0f0f0;border:1px solid #fff;box-shadow:-1px -1px 0 #2e3c48"></div>
<div class="a" style="left:150px;top:86px;width:83px;height:24px;background:linear-gradient(#a9bcd6,#d2deee 60%,#e2ebf6);color:#8c8c8c;font-size:12px;line-height:27px;padding-left:1px"><i class="sx" style="font-style:normal">View</i></div>
<div class="b " style="left:159px;top:118px;width:64px;height:17px;padding-top:1px;"><span>Zoom</span></div>
<div class="b " style="left:159px;top:135px;width:64px;height:17px;padding-top:1px;"><span>Move</span></div>
<div class="b p t2" style="left:159px;top:152px;width:64px;height:17px;"><span>Rotate</span></div>
<div class="b " style="left:159px;top:169px;width:64px;height:17px;padding-top:1px;"><span style="transform:scaleX(.94)">Perspective</span></div>
<div class="b " style="left:159px;top:186px;width:64px;height:17px;padding-top:1px;"><span>Dolly</span></div>
<div class="a" style="left:1092px;top:61px;width:188px;height:923px;background:#f0f0f0"></div>
<div class="a" style="left:1094px;top:64px;width:173px;height:3px;background:#fff;border-bottom:1px solid #a0a0a0;border-right:1px solid #a0a0a0"></div>
<div class="a" style="left:1094px;top:67px;width:173px;height:3px;background:#fff;border-bottom:1px solid #a0a0a0;border-right:1px solid #a0a0a0"></div>
<div class="b" style="left:1269px;top:62px;width:10px;height:10px;border-bottom-width:1px;border-bottom-color:#696969;border-right-color:#696969"><svg style="position:absolute;left:1px;top:1px" width="7" height="6" viewBox="0 0 7 6"><path d="M0.500 0 L6.500 6 M6.500 0 L0.500 6" stroke="#000" stroke-width="1"/></svg></div>
<div class="b " style="left:1092px;top:74px;width:40px;height:15px;"><span>New</span></div>
<div class="b " style="left:1132px;top:74px;width:40px;height:15px;"><span>Clone</span></div>
<div class="b " style="left:1172px;top:74px;width:40px;height:15px;"><span>Delete</span></div>
<div class="b " style="left:1092px;top:89px;width:40px;height:16px;"><span>Prop</span></div>
<div class="b " style="left:1132px;top:89px;width:20px;height:16px;"><span style="font-size:16px;transform:scaleX(.8);top:-1px;font-weight:normal">&lt;</span></div>
<div class="b " style="left:1152px;top:89px;width:20px;height:16px;"><span style="font-size:16px;transform:scaleX(.8);top:-1px">&gt;</span></div>
<div class="b " style="left:1172px;top:89px;width:40px;height:16px;"><span>Misc</span></div>
<div class="a" style="left:1093px;top:105px;width:187px;height:417px;background:#fff;border-top:1px solid #696969;border-left:1px solid #696969;box-shadow:-1px 0 0 #b4b4b4;border-right:1px solid #e0e0e0;border-bottom:1px solid #fff"></div>
<div class="a" style="left:1138px;top:108px;width:139px;height:18px;background:#0078d7"></div>
<div class="a" style="left:1094px;top:107px;width:184px;height:20px;border:1px dotted #d86800"></div>
<svg class="a" style="left:1095px;top:108px" width="42" height="18" viewBox="0 0 42 18">
<path d="M17.500 1 V17.500 H2" stroke="#000" fill="none"/><rect x="23" y="0" width="16" height="17" fill="#fff"/><path d="M39.500 1 V17.500 H24" stroke="#000" fill="none"/>
<path d="M2 8 C5 3.500 11 3.500 14.500 7" stroke="#000" fill="none" stroke-width="1"/><path d="M4 4 L5 6 M8 2.500 L8 4.500 M12 3.500 L11 5" stroke="#000" stroke-width="0.800"/>
<ellipse cx="8.500" cy="9.500" rx="2.800" ry="3.800" fill="#000"/><circle cx="9.300" cy="8.500" r="0.900" fill="#fff"/>
</svg>
<svg class="a" style="left:1142px;top:113px" width="12" height="8" viewBox="0 0 12 8"><path d="M0.500 1 H10.500 L5.500 6.500 Z" fill="#fff"/></svg>
<div class="t" style="left:1157px;top:110px;color:#fff"><i class="sx" style="font-style:normal">obj1</i></div>
<div class="a" style="left:1094px;top:525px;width:173px;height:3px;background:#fff;border-bottom:1px solid #a0a0a0;border-right:1px solid #a0a0a0"></div>
<div class="a" style="left:1094px;top:528px;width:173px;height:3px;background:#fff;border-bottom:1px solid #a0a0a0;border-right:1px solid #a0a0a0"></div>
<div class="b" style="left:1269px;top:523px;width:10px;height:10px;border-bottom-width:1px;border-bottom-color:#696969;border-right-color:#696969"><svg style="position:absolute;left:1px;top:1px" width="7" height="6" viewBox="0 0 7 6"><path d="M0.500 0 L6.500 6 M6.500 0 L0.500 6" stroke="#000" stroke-width="1"/></svg></div>
<div class="b " style="left:1092px;top:535px;width:40px;height:15px;"><span>New</span></div>
<div class="b " style="left:1132px;top:535px;width:40px;height:15px;"><span>Clone</span></div>
<div class="b " style="left:1172px;top:535px;width:40px;height:15px;"><span>Delete</span></div>
<div class="b " style="left:1092px;top:550px;width:40px;height:16px;"><span>Prop</span></div>
<div class="b " style="left:1172px;top:550px;width:40px;height:16px;"><span>Misc</span></div>
<div class="a" style="left:1093px;top:566px;width:187px;height:417px;background:#fff;border-top:1px solid #696969;border-left:1px solid #696969;box-shadow:-1px 0 0 #b4b4b4;border-right:1px solid #e0e0e0"></div>
<div class="a" style="left:1094px;top:568px;width:184px;height:20px;background:#0078d7"></div>
<div class="a" style="left:1096px;top:570px;width:16px;height:17px;background:#fff;border:1px solid #000"></div>
<div class="t" style="left:1118px;top:571px;color:#fff"><i class="sx" style="font-style:normal">default</i></div>
<div class="a" style="left:0;top:983px;width:1280px;height:1px;background:#f0f0f0"></div>
<div class="a" style="left:0;top:984px;width:1280px;height:40px;background:#1c1c1c"></div>
<svg class="a" style="left:16px;top:996px" width="16" height="16" viewBox="0 0 16 16"><path d="M0 2.300 L6.800 1.300 V7.500 H0 Z M7.700 1.200 L16 0 V7.500 H7.700 Z M0 8.400 H6.800 V14.700 L0 13.700 Z M7.700 8.400 H16 V16 L7.700 14.800 Z" fill="#fff"/></svg>
<div class="a" style="left:48px;top:984px;width:288px;height:40px;background:#f2f2f2;border-top:1px solid #c4c4c4"></div>
<svg class="a" style="left:58px;top:994px" width="20" height="20" viewBox="0 0 20 20"><circle cx="12" cy="7.500" r="5.200" fill="none" stroke="#222" stroke-width="1.300"/><path d="M8.300 11.300 L2 18" stroke="#222" stroke-width="1.500"/></svg>
<div class="t" style="left:88px;top:995px;font-size:15px;line-height:18px;color:#3a3a3a;letter-spacing:-0.45px">Buscar</div>
<svg class="a" style="left:250px;top:984px" width="90" height="40" viewBox="0 0 90 40">
<g fill="none" stroke="#4f9a5c" stroke-width="1.300" stroke-linecap="round"><path d="M26 19 C27 26 28 32 24 40"/><path d="M22 22 C26 24 27 28 27 31 M19 27 C23 28 25 31 26 34 M29 23 C29 27 28 30 27 33"/>
<path d="M66 16 C64 24 60 30 56 33 C50 36 44 36 38 40"/><path d="M70 26 C66 30 61 32 57 33 M56 27 L58 32 M60 26 L60 31 M53 35 C57 36 61 37 64 36 M55 34 C59 34 63 34 67 32"/></g>
<ellipse cx="34.0" cy="3.0" rx="1.6" ry="2.5" transform="rotate(25 34.0 3.0)" fill="#a898dc"/><ellipse cx="32.3" cy="4.8" rx="1.6" ry="2.5" transform="rotate(36 32.3 4.8)" fill="#8878c8"/><ellipse cx="32.9" cy="7.7" rx="1.6" ry="2.5" transform="rotate(12 32.9 7.7)" fill="#8878c8"/><ellipse cx="30.0" cy="9.0" rx="1.6" ry="2.5" transform="rotate(41 30.0 9.0)" fill="#a898dc"/><ellipse cx="31.2" cy="12.1" rx="1.6" ry="2.5" transform="rotate(7 31.2 12.1)" fill="#8878c8"/><ellipse cx="27.7" cy="13.1" rx="1.6" ry="2.5" transform="rotate(45 27.7 13.1)" fill="#8878c8"/><ellipse cx="29.5" cy="16.5" rx="1.6" ry="2.5" transform="rotate(2 29.5 16.5)" fill="#a898dc"/><ellipse cx="25.4" cy="17.2" rx="1.6" ry="2.5" transform="rotate(50 25.4 17.2)" fill="#8878c8"/><ellipse cx="15.0" cy="13.0" rx="1.2" ry="2.0" transform="rotate(-37 15.0 13.0)" fill="#a898dc"/><ellipse cx="15.5" cy="15.1" rx="1.2" ry="2.0" transform="rotate(-25 15.5 15.1)" fill="#8878c8"/><ellipse cx="18.3" cy="15.6" rx="1.2" ry="2.0" transform="rotate(-52 18.3 15.6)" fill="#8878c8"/><ellipse cx="17.5" cy="18.6" rx="1.2" ry="2.0" transform="rotate(-18 17.5 18.6)" fill="#a898dc"/><ellipse cx="21.0" cy="18.5" rx="1.2" ry="2.0" transform="rotate(-59 21.0 18.5)" fill="#8878c8"/><ellipse cx="19.6" cy="22.1" rx="1.2" ry="2.0" transform="rotate(-12 19.6 22.1)" fill="#8878c8"/><ellipse cx="70.0" cy="4.0" rx="1.5" ry="2.4" transform="rotate(20 70.0 4.0)" fill="#a898dc"/><ellipse cx="68.4" cy="5.9" rx="1.5" ry="2.4" transform="rotate(32 68.4 5.9)" fill="#8878c8"/><ellipse cx="69.4" cy="8.8" rx="1.5" ry="2.4" transform="rotate(5 69.4 8.8)" fill="#8878c8"/><ellipse cx="66.4" cy="10.1" rx="1.5" ry="2.4" transform="rotate(38 66.4 10.1)" fill="#a898dc"/><ellipse cx="68.3" cy="13.3" rx="1.5" ry="2.4" transform="rotate(-2 68.3 13.3)" fill="#8878c8"/><ellipse cx="64.3" cy="14.4" rx="1.5" ry="2.4" transform="rotate(45 64.3 14.4)" fill="#8878c8"/><ellipse cx="79.0" cy="8.0" rx="1.5" ry="2.4" transform="rotate(30 79.0 8.0)" fill="#a898dc"/><ellipse cx="77.1" cy="9.7" rx="1.5" ry="2.4" transform="rotate(41 77.1 9.7)" fill="#8878c8"/><ellipse cx="77.3" cy="12.7" rx="1.5" ry="2.4" transform="rotate(18 77.3 12.7)" fill="#8878c8"/><ellipse cx="74.3" cy="13.8" rx="1.5" ry="2.4" transform="rotate(45 74.3 13.8)" fill="#a898dc"/><ellipse cx="75.0" cy="17.1" rx="1.5" ry="2.4" transform="rotate(14 75.0 17.1)" fill="#8878c8"/><ellipse cx="71.6" cy="17.9" rx="1.5" ry="2.4" transform="rotate(49 71.6 17.9)" fill="#8878c8"/><ellipse cx="72.8" cy="21.5" rx="1.5" ry="2.4" transform="rotate(9 72.8 21.5)" fill="#a898dc"/><ellipse cx="68.8" cy="22.0" rx="1.5" ry="2.4" transform="rotate(54 68.8 22.0)" fill="#8878c8"/><ellipse cx="70.6" cy="25.9" rx="1.5" ry="2.4" transform="rotate(5 70.6 25.9)" fill="#8878c8"/><ellipse cx="75.0" cy="27.0" rx="1.2" ry="2.0" transform="rotate(61 75.0 27.0)" fill="#a898dc"/><ellipse cx="72.3" cy="27.5" rx="1.2" ry="2.0" transform="rotate(74 72.3 27.5)" fill="#8878c8"/><ellipse cx="71.1" cy="30.5" rx="1.2" ry="2.0" transform="rotate(44 71.1 30.5)" fill="#8878c8"/><ellipse cx="67.5" cy="29.4" rx="1.2" ry="2.0" transform="rotate(82 67.5 29.4)" fill="#a898dc"/><ellipse cx="66.9" cy="33.6" rx="1.2" ry="2.0" transform="rotate(36 66.9 33.6)" fill="#8878c8"/>
<ellipse cx="55" cy="9" rx="7" ry="4.500" fill="#dcd8f6" opacity="0.900" transform="rotate(-40 55 9)"/><ellipse cx="58" cy="14.500" rx="4.500" ry="3" fill="#dfe0f8" opacity="0.900" transform="rotate(-20 58 14.500)"/><ellipse cx="43" cy="21" rx="5.500" ry="3.500" fill="#dcd8f6" opacity="0.900" transform="rotate(-35 43 21)"/><ellipse cx="48" cy="24.500" rx="3" ry="2.200" fill="#dfe0f8" opacity="0.900"/>
<g transform="rotate(40 49 15)"><ellipse cx="50" cy="15" rx="9.500" ry="6" fill="#f2c23c"/><ellipse cx="41.500" cy="15" rx="3.600" ry="3.800" fill="#5a4030"/><rect x="45.500" y="9.300" width="2.600" height="11.400" fill="#f6dc8a"/><rect x="49" y="9" width="2.400" height="12" fill="#7a6a5a"/><rect x="53" y="9.600" width="2.400" height="10.800" fill="#6a5040"/><path d="M56.500 10.500 C60.500 12 60.500 18 56.500 19.500 Z" fill="#e89a18"/></g>
<path d="M43.500 8.500 L42 4 M41 11 L37 11.500" stroke="#6a5a50" stroke-width="0.900" fill="none"/>
</svg>
<svg class="a" style="left:351px;top:995px" width="18" height="18" viewBox="0 0 18 18"><path d="M0.500 1.500 H11.500 M0.500 15.500 H11.500" stroke="#fff" stroke-width="1.300" fill="none"/><rect x="0.650" y="4.650" width="10.700" height="7.700" fill="none" stroke="#fff" stroke-width="1.300"/><path d="M15 1 V4 M15 14 V17 M15 6.500 V11.500" stroke="#fff" stroke-width="1.600"/></svg>
<svg class="a" style="left:399px;top:994px" width="24" height="20" viewBox="0 0 24 20"><path d="M1 2 H9 L11 4 H23 V18 H1 Z" fill="#e8a820"/><path d="M1 6 H23 V18.500 H1 Z" fill="#fcd45c"/><path d="M1 12 H23 V18.500 H1 Z" fill="#f8c838"/><path d="M7 11 H17 V18.500 H14.500 V14 H9.500 V18.500 H7 Z" fill="#3a8ee0"/></svg>
<svg class="a" style="left:446px;top:992px" width="27" height="24" viewBox="0 0 27 24"><path d="M11 5 C4 5 1 10 1 14 C1 19 5 22 10 22 C13 22 12 18.500 14.500 18 C18 17.500 21 17 21 12 C21 8 17 5 11 5 Z" fill="#dfe6f2" stroke="#8a9ab8" stroke-width="0.800"/><circle cx="6" cy="11" r="1.800" fill="#e03030"/><circle cx="10.500" cy="8.500" r="1.800" fill="#30a030"/><circle cx="5.500" cy="16" r="1.800" fill="#f0c020"/><circle cx="15.500" cy="9.500" r="1.800" fill="#3060d0"/><path d="M24 2 L13 19" stroke="#c87830" stroke-width="2.400"/><path d="M25.500 0 L22 5.500 L24.500 6.500 Z" fill="#e8c898"/></svg>
<div class="a" style="left:485px;top:984px;width:48px;height:40px;background:#3e3e3e"></div>
<svg class="a" style="left:495px;top:992px" width="26" height="24" viewBox="0 0 26 24"><rect x="1" y="2" width="19" height="15" fill="#d8d8d8" stroke="#888" stroke-width="0.800"/><rect x="3" y="4" width="15" height="11" fill="#1a6a7a"/><path d="M3 8 H18 M3 11.500 H18 M8 4 V15 M13 4 V15" stroke="#6ab8c8" stroke-width="0.500"/><rect x="7" y="17" width="7" height="3" fill="#b0b0b0"/><rect x="4" y="20" width="13" height="2" fill="#c8c8c8"/><path d="M7 22 C8 14 13 6 24 1 L24 5 L21 6 L23.500 9 L19.500 10 L21 13.500 L16.500 13.500 L17 17 L13 16.500 L12 20 L9.500 19 Z" fill="#38b828" stroke="#1a6a12" stroke-width="0.700"/><path d="M7.500 22.500 L22.500 3" stroke="#c8f060" stroke-width="0.900"/></svg>
<svg class="a" style="left:546px;top:992px" width="25" height="24" viewBox="0 0 25 24"><defs><linearGradient id="og" x1="0" y1="0" x2="0" y2="1"><stop offset="0" stop-color="#ffc400"/><stop offset="1" stop-color="#f07800"/></linearGradient></defs><circle cx="11.500" cy="12" r="11" fill="url(#og)"/><path d="M10 20 C6.500 20 6.500 15.500 10 15.500 C10.500 12.500 15 12 16.500 14.500 C19 13 22 14.500 21.500 17 C24 17 24 20 21.500 20 Z" fill="#f4f4f4"/></svg>
<svg class="a" style="left:594px;top:992px" width="25" height="25" viewBox="0 0 25 25"><circle cx="12.500" cy="12.500" r="12" fill="#e8e8e8"/><path d="M12.500 12.500 L2.100 6.500 A12 12 0 0 1 22.900 6.500 Z" fill="#e33b2e"/><path d="M12.500 12.500 L22.900 6.500 A12 12 0 0 1 12.500 24.500 Z" fill="#fbc116"/><path d="M12.500 12.500 L12.500 24.500 A12 12 0 0 1 2.100 6.500 Z" fill="#2da94f"/><circle cx="12.500" cy="12.500" r="5.600" fill="#fff"/><circle cx="12.500" cy="12.500" r="4.400" fill="#4688f4"/></svg>
<div class="a" style="left:391px;top:1021px;width:40px;height:3px;background:#7cb8ea"></div>
<div class="a" style="left:485px;top:1021px;width:48px;height:3px;background:#7cb8ea"></div>
<div class="a" style="left:538px;top:1021px;width:40px;height:3px;background:#7cb8ea"></div>
<div class="a" style="left:587px;top:1021px;width:40px;height:3px;background:#7cb8ea"></div>
<svg class="a" style="left:958px;top:994px" width="170" height="20" viewBox="0 0 170 20">
<g fill="none" stroke="#fff" stroke-width="1.100">
<rect x="3.500" y="6.500" width="7" height="7" rx="1"/><path d="M10.500 9 L13.500 7 V13 L10.500 11 M4 4 C5 2.500 9 2.500 10.500 4 M4 16 C5 17.500 9 17.500 10.500 16"/>
<rect x="27.500" y="6.500" width="7" height="10" rx="1"/><path d="M29 6.500 V2.500 H33 V6.500 M34 16 L36 18 L39.500 13.500"/>
<path d="M123.500 16.500 C125 10 130 5.500 136 5 M126.500 16.500 C127.500 12 131.500 8.500 136 8 M129.500 16.500 C130 14 133 11.500 136 11" opacity="0.900"/>
<path d="M144.500 8 H147 L151 4 V16 L147 12 H144.500 Z M153.500 7.500 C155 9 155 11 153.500 12.500 M156 5.500 C158.500 8 158.500 12 156 14.500"/><path d="M158.500 3.500 C162 7 162 13 158.500 16.500" opacity="0.400"/>
</g>
<circle cx="134.500" cy="16" r="1.600" fill="#fff"/>
<path d="M56 2.500 C58.500 4 61 4.500 63 4.500 V10 C63 14 60 16.800 56 18.500 C52 16.800 49 14 49 10 V4.500 C51 4.500 53.500 4 56 2.500 Z" fill="#1c1c1c" stroke="#fff" stroke-width="1.300"/><path d="M56 2.500 C53.500 4 51 4.500 49 4.500 V9.800 H56 Z" fill="#fff"/><path d="M56 9.800 H63 C63 14 60 16.800 56 18.500 Z" fill="#fff"/><path d="M56 3 V18 M49.500 9.800 H62.500" stroke="#fff" stroke-width="1"/>
<circle cx="60.500" cy="15" r="3.600" fill="#18a040"/><path d="M58.700 15 L60 16.400 L62.500 13.600" stroke="#fff" stroke-width="1" fill="none"/>
<path d="M76 15.500 C72 15.500 72 10.500 76 10.500 C77 6.500 83 6 84.500 9.500 C87.500 9 89 11.500 88 13 C89 14 88 15.500 86.500 15.500 Z" fill="#e8e8e8"/><path d="M72.500 13.500 C76 11 82 11 88 13.500" stroke="#b0b0b0" stroke-width="0.800" fill="none"/>
<path d="M97.500 5 L99.500 3.500 L101.500 5 H110 V15.500 H104 L103 17 H98 V12 L97 10 Z" fill="#f07814"/><rect x="101.500" y="7.500" width="8.500" height="6" fill="#c85e0c" stroke="#f6c8a0" stroke-width="0.900"/><path d="M103.500 11.500 L105 10 L106.500 11 L108.500 9.500" stroke="#f6c8a0" stroke-width="0.800" fill="none"/><path d="M104.500 15.500 H108" stroke="#f6c8a0" stroke-width="0.900"/>
</svg>
<div class="t" style="left:1131px;top:997px;color:#fff;font-size:12px"><i style="font-style:normal;display:inline-block;transform:scaleX(.8);transform-origin:0 50%">ESP</i></div>
<div class="t" style="left:1166px;top:988px;color:#fff;font-size:12px;width:52px;text-align:center;letter-spacing:-0.15px">4:19 p. m.</div>
<div class="t" style="left:1165px;top:1006px;color:#fff;font-size:12px;width:54px;text-align:center;letter-spacing:-0.15px">20/5/2025</div>
<svg class="a" style="left:1238px;top:995px" width="18" height="18" viewBox="0 0 18 18"><path d="M1.500 1.500 H16.500 V12.500 H11 L9 15 L7 12.500 H1.500 Z" fill="none" stroke="#fff" stroke-width="1.200"/></svg>
</body></html>
